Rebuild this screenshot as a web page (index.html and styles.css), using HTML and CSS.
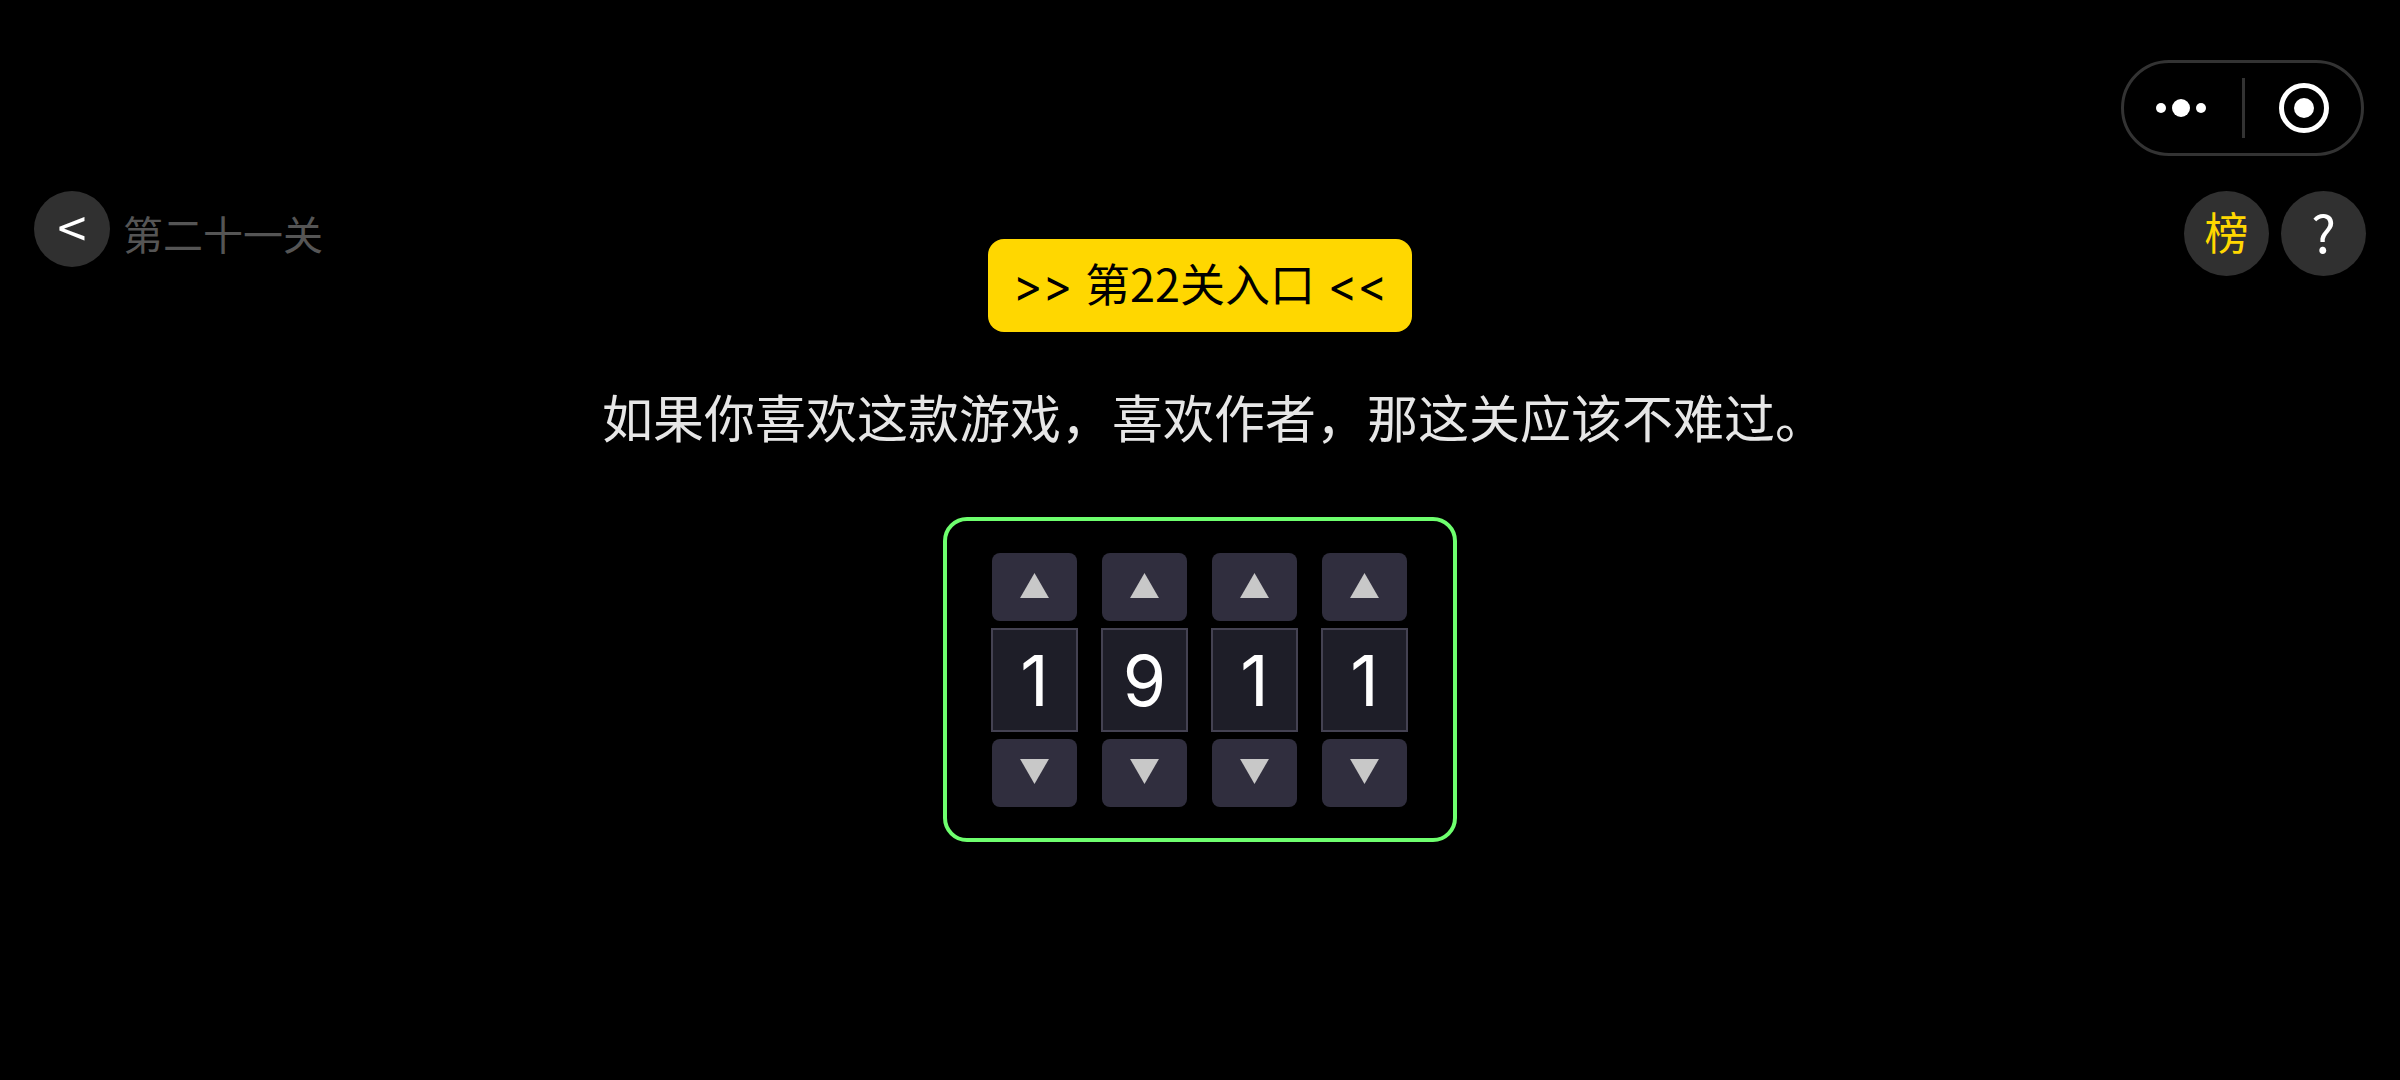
FILE: index.html
```html
<!DOCTYPE html>
<html lang="zh-CN">
<head>
    <meta charset="UTF-8">
    <meta name="viewport" content="width=device-width, initial-scale=1.0">
    <title>第二十一关</title>
    <link rel="stylesheet" href="styles.css">
</head>
<body>

<header class="top-bar">
    <div class="capsule">
        <button class="capsule-btn more" type="button" aria-label="更多">
            <svg width="50" height="18" viewBox="0 0 50 18">
                <circle cx="5" cy="9" r="5"/><circle cx="25" cy="9" r="9"/><circle cx="45" cy="9" r="5"/>
            </svg>
        </button>
        <span class="divider"></span>
        <button class="capsule-btn close" type="button" aria-label="关闭">
            <svg width="50" height="50" viewBox="0 0 50 50">
                <circle class="ring" cx="25" cy="25" r="22.5"/><circle cx="25" cy="25" r="10"/>
            </svg>
        </button>
    </div>
</header>

<div class="stage">
    <nav class="level-nav">
        <button class="round-btn back" type="button" aria-label="返回">&lt;</button>
        <h1 class="level-name">第二十一关</h1>
    </nav>

    <main class="puzzle">
        <button class="entry" type="button"><span class="arrows">&gt;&gt; </span>第22关入口<span class="arrows"> &lt;&lt;</span></button>
        <p class="hint">如果你喜欢这款游戏，喜欢作者，那这关应该不难过。</p>

        <div class="lock">
            <div class="wheel">
                <button class="step" type="button" data-step="1" aria-label="加一"><svg viewBox="0 0 30 26"><path d="M15 0L30 26H0z"/></svg></button>
                <output class="digit">1</output>
                <button class="step" type="button" data-step="-1" aria-label="减一"><svg viewBox="0 0 30 26"><path d="M0 0H30L15 26z"/></svg></button>
            </div>
            <div class="wheel">
                <button class="step" type="button" data-step="1" aria-label="加一"><svg viewBox="0 0 30 26"><path d="M15 0L30 26H0z"/></svg></button>
                <output class="digit">9</output>
                <button class="step" type="button" data-step="-1" aria-label="减一"><svg viewBox="0 0 30 26"><path d="M0 0H30L15 26z"/></svg></button>
            </div>
            <div class="wheel">
                <button class="step" type="button" data-step="1" aria-label="加一"><svg viewBox="0 0 30 26"><path d="M15 0L30 26H0z"/></svg></button>
                <output class="digit">1</output>
                <button class="step" type="button" data-step="-1" aria-label="减一"><svg viewBox="0 0 30 26"><path d="M0 0H30L15 26z"/></svg></button>
            </div>
            <div class="wheel">
                <button class="step" type="button" data-step="1" aria-label="加一"><svg viewBox="0 0 30 26"><path d="M15 0L30 26H0z"/></svg></button>
                <output class="digit">1</output>
                <button class="step" type="button" data-step="-1" aria-label="减一"><svg viewBox="0 0 30 26"><path d="M0 0H30L15 26z"/></svg></button>
            </div>
        </div>
    </main>

    <div class="tools">
        <button class="round-btn rank" type="button">榜</button>
        <button class="round-btn help" type="button" aria-label="帮助">?</button>
    </div>
</div>

<script>
    // Turn a wheel one step, wrapping between 0 and 9
    document.querySelectorAll('.step').forEach(button => {
        button.addEventListener('click', () => {
            const digit = button.parentElement.querySelector('.digit');
            digit.textContent = (Number(digit.textContent) + Number(button.dataset.step) + 10) % 10;
        });
    });
</script>

</body>
</html>
```
FILE: styles.css
```css
* { margin: 0; padding: 0; box-sizing: border-box; }
body { font-family: "Noto Sans CJK SC", sans-serif; min-height: 100vh; background-color: #000; color: #fff; }
button { border: none; font-family: inherit; color: inherit; cursor: pointer; }
svg { display: block; }

/* Mini program capsule */
.top-bar { display: flex; justify-content: flex-end; padding: 60px 36px 35px; }
.capsule {
    display: flex;
    align-items: center;
    width: 243px;
    height: 96px;
    border: 3px solid #333;
    border-radius: 48px;
}
.capsule-btn { flex: 1; display: flex; justify-content: center; background: none; }
.capsule-btn svg { fill: #fff; }
.capsule-btn .ring { fill: none; stroke: #fff; stroke-width: 5; }
.more { padding-right: 4px; }
.close { padding-left: 2px; }
.divider { width: 3px; height: 60px; background-color: #333; }

/* Level area */
.stage {
    display: grid;
    grid-template-columns: 1fr auto 1fr;
    align-items: start;
    padding: 0 34px;
}
.level-nav { display: flex; align-items: center; gap: 13px; }
.level-name { font-size: 40px; font-weight: 400; line-height: 48px; padding-top: 8px; color: #555; }
.tools { display: flex; justify-content: flex-end; gap: 12px; }

.round-btn {
    width: 85px;
    height: 85px;
    padding-bottom: 6px;
    border-radius: 50%;
    background-color: #303030;
    font-size: 44px;
    line-height: 48px;
}
.back { width: 76px; height: 76px; }
.rank { color: #ffd700; }
.back, .help { font-size: 52px; }

/* Puzzle */
.puzzle { display: flex; flex-direction: column; align-items: center; padding-top: 48px; }
.entry {
    padding: 12px 25px 17px;
    border-radius: 16px;
    background-color: #ffd700;
    color: #000;
    font-size: 45px;
    line-height: 64px;
    white-space: pre;
}
.arrows { font-family: "Inter", sans-serif; line-height: 40px; }
.hint { padding: 46px 0 63px 28px; font-size: 51px; line-height: 76px; color: #e6e6e6; }

/* Number lock */
.lock {
    display: flex;
    gap: 23px;
    padding: 32px 45px 31px 44px;
    border: 4px solid #6eff6e;
    border-radius: 24px;
}
.wheel { display: flex; flex-direction: column; align-items: center; gap: 7px; }
.step {
    display: flex;
    justify-content: center;
    align-items: center;
    width: 85px;
    height: 68px;
    padding-bottom: 4px;
    border-radius: 8px;
    background-color: #302e3e;
}
.step svg { width: 29px; height: 25px; fill: #c8c8c8; }
.digit {
    width: 87px;
    height: 104px;
    border: 2px solid #444252;
    background-color: #1e1e28;
    font-family: "Inter", sans-serif;
    font-size: 70px;
    line-height: 102px;
    text-align: center;
}
```
